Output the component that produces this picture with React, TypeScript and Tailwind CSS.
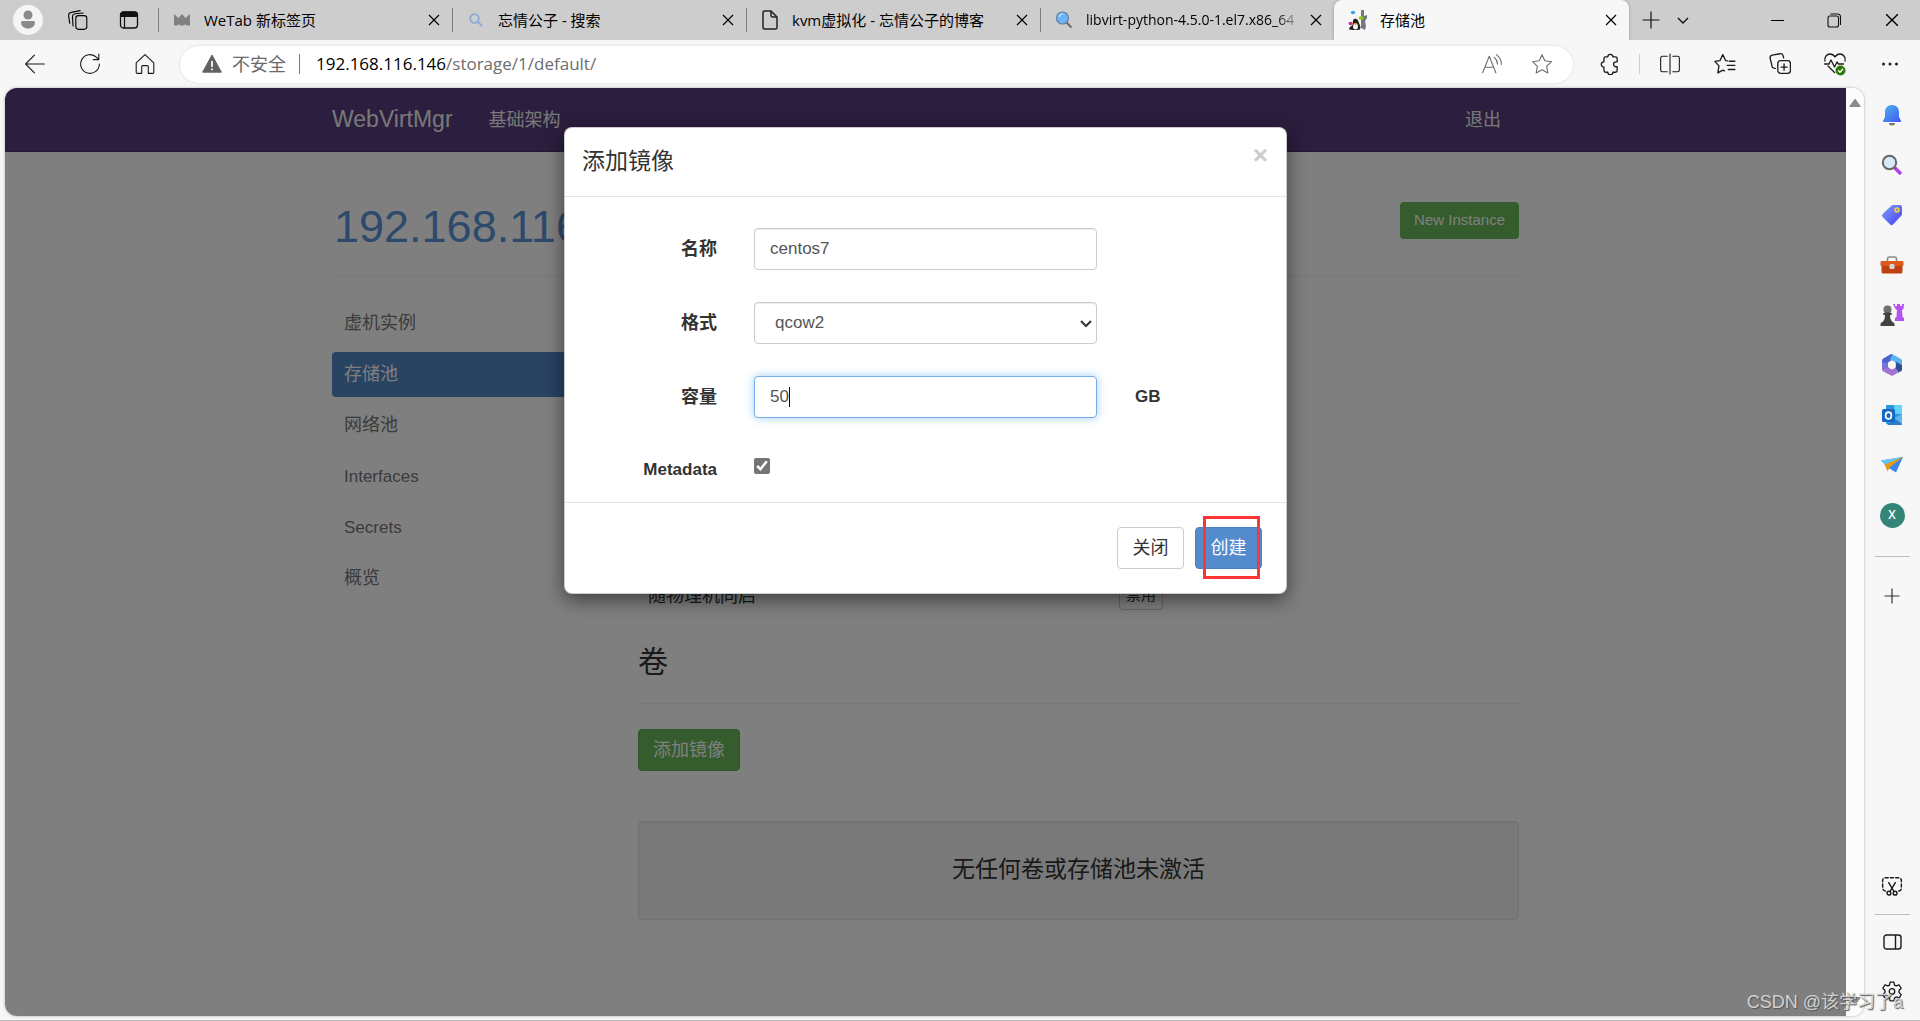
import type { ReactNode } from "react";

const uiFont = "font-['Open_Sans','Noto_Sans_CJK_SC',sans-serif]";
const pageFont = "font-['Liberation_Sans','Noto_Sans_CJK_SC',sans-serif]";

function Line({ size = 22, width = 1, children }: { size?: number; width?: number; children: ReactNode }) {
  return (
    <svg width={size} height={size} viewBox="0 0 20 20" fill="none" stroke="currentColor" strokeWidth={width} strokeLinecap="round" strokeLinejoin="round">
      {children}
    </svg>
  );
}

function Cross({ size = 12 }: { size?: number }) {
  return (
    <svg width={size} height={size} viewBox="0 0 12 12" stroke="currentColor" strokeWidth="1.2">
      <path d="M1 1l10 10M11 1L1 11" />
    </svg>
  );
}

const tabs = [
  {
    title: "WeTab 新标签页",
    icon: (
      <svg width="16" height="12" viewBox="0 0 16 12" fill="#808080">
        <path d="M0 0l4.500 4L8 0l3.500 4L16 0v11.500h-3.500l-1-1.500-1.500 1.500H6L4.500 10l-1 1.500H0z" />
      </svg>
    )
  },
  {
    title: "忘情公子 - 搜索",
    icon: (
      <svg width="16" height="16" viewBox="0 0 16 16" fill="none" stroke="#8ba9d8" strokeWidth="1.8">
        <circle cx="6.5" cy="6.5" r="4.3" />
        <path d="M9.7 9.7l4.500 4.500" />
      </svg>
    )
  },
  {
    title: "kvm虚拟化 - 忘情公子的博客",
    icon: (
      <svg width="18" height="20" viewBox="0 0 18 20" fill="none" stroke="#222" strokeWidth="1.5" strokeLinejoin="round">
        <path d="M2 2.500A1.500 1.500 0 0 1 3.500 1H10l6 6v10.500a1.500 1.500 0 0 1-1.500 1.500h-11A1.500 1.500 0 0 1 2 17.500z" />
        <path d="M10 1v4.500A1.500 1.500 0 0 0 11.500 7H16" />
      </svg>
    )
  },
  {
    title: "libvirt-python-4.5.0-1.el7.x86_64",
    long: true,
    icon: (
      <svg width="20" height="20" viewBox="0 0 20 20">
        <path d="M12 12l5.500 5.500" stroke="#6b6b6b" strokeWidth="2" />
        <circle cx="8.500" cy="8" r="6" fill="#6db3f7" stroke="#5f7f9f" strokeWidth="1.200" />
        <path d="M5 7a4 4 0 0 1 4-3" stroke="#b7dcff" strokeWidth="1.500" fill="none" />
      </svg>
    )
  },
  {
    title: "存储池",
    active: true,
    icon: (
      <svg width="22" height="22" viewBox="0 0 22 22">
        <path d="M14 1h3v6l3-1v3l-2 3 1 5-1 4-4-2z" fill="#737983" />
        <ellipse cx="6" cy="3.500" rx="2.200" ry="1.800" fill="#3ea3e6" />
        <path d="M6 12c0-3 4-3 5-.5l2.500 6.500-.5 2.500-3 .5H6l-4-.5.5-2L5.500 16z" fill="#1d1d1d" />
        <ellipse cx="8.500" cy="17.500" rx="2.500" ry="3" fill="#f4f4f4" />
        <path d="M6.500 14.200h4l-2 2.300z" fill="#f3b70d" />
        <ellipse cx="14" cy="9" rx="2.500" ry="1.800" fill="#8fca25" />
        <ellipse cx="3.500" cy="14.500" rx="2" ry="1.800" fill="#d6268c" />
      </svg>
    )
  }
];

function TabStrip() {
  return (
    <header className="flex h-10 items-center bg-[#cdcdcd] text-black">
      <div className="flex w-[158px] shrink-0 items-center">
        <button aria-label="Profile" className="ml-[13px] grid size-[30px] place-items-center rounded-full bg-[#f5f5f5]">
          <svg width="18" height="20" viewBox="0 0 18 20" fill="#8a8a8a">
            <circle cx="9" cy="5" r="4.500" />
            <path d="M2 12.500A1.500 1.500 0 0 1 3.500 11h11a1.500 1.500 0 0 1 1.500 1.500C16 16 13 18.500 9 18.500S2 16 2 12.500z" />
          </svg>
        </button>
        <button aria-label="Workspaces" className="ml-6">
          <Line size={22} width={1}>
            <rect x="8" y="6" width="10" height="12.500" rx="2.500" />
            <path d="M5.500 15.500l-.5-8a3 3 0 0 1 2.700-3.200l7-.6" />
            <path d="M2.500 13L1.500 6.500a3 3 0 0 1 2.500-3.400L12 1.500" />
          </Line>
        </button>
        <button aria-label="Tab actions" className="ml-[30px]">
          <svg width="20" height="20" viewBox="0 0 20 20">
            <rect x="1.500" y="2" width="17" height="16" rx="3" fill="none" stroke="#111" strokeWidth="1.300" />
            <path d="M1 5a3.500 3.500 0 0 1 3.500-3.500h11A3.500 3.500 0 0 1 19 5v2H1z" fill="#111" />
            <path d="M5.500 7v11" stroke="#111" strokeWidth="1.200" />
          </svg>
        </button>
      </div>
      {tabs.map((tab) => (
        <div
          key={tab.title}
          className={
            tab.active
              ? "flex h-10 max-w-[295px] min-w-0 flex-1 items-center rounded-t-lg bg-[#f7f7f7] shadow-[0_0_3px_rgba(0,0,0,0.3)] [clip-path:inset(-4px_-4px_0_-4px)]"
              : "flex h-10 max-w-[294px] min-w-0 flex-1 items-center"
          }
        >
          <span className={tab.active ? "h-6 w-px" : "h-6 w-px bg-[#7d7d7d]"} />
          <span className="ml-3 grid w-[22px] shrink-0 place-items-center">{tab.icon}</span>
          <span
            className={
              tab.long
                ? "mr-1 ml-[11px] min-w-0 flex-1 text-sm whitespace-nowrap [mask-image:linear-gradient(to_right,black_88%,transparent)]"
                : "mr-1 ml-[11px] min-w-0 flex-1 truncate text-[15px]"
            }
          >
            {tab.title}
          </span>
          <button aria-label="Close tab" className="mr-2 grid size-5 shrink-0 place-items-center">
            <Cross />
          </button>
        </div>
      ))}
      <button aria-label="New tab" className="ml-[13px]">
        <svg width="18" height="18" viewBox="0 0 18 18" stroke="#111" strokeWidth="1.200">
          <path d="M9 0.500v17M0.500 9h17" />
        </svg>
      </button>
      <button aria-label="Tab list" className="ml-4">
        <svg width="14" height="14" viewBox="0 0 14 14" fill="none" stroke="#111" strokeWidth="1.400">
          <path d="M2 5l5 5 5-5" />
        </svg>
      </button>
      <div className="ml-auto flex h-10">
        <button aria-label="Minimize" className="grid w-[57px] place-items-center">
          <span className="h-px w-[13px] bg-black" />
        </button>
        <button aria-label="Restore" className="grid w-[57px] place-items-center">
          <svg width="15" height="15" viewBox="0 0 15 15" fill="none" stroke="#111" strokeWidth="1.100">
            <rect x="1" y="3" width="10.500" height="11" rx="2" />
            <path d="M3.500 1h7a3 3 0 0 1 3 3v8" />
          </svg>
        </button>
        <button aria-label="Close" className="grid w-[57px] place-items-center">
          <Cross size={14} />
        </button>
      </div>
    </header>
  );
}

function ToolButton({ label, children }: { label: string; children: ReactNode }) {
  return (
    <button aria-label={label} className="grid h-10 w-[55px] shrink-0 place-items-center text-[#1b1b1b]">
      {children}
    </button>
  );
}

function Toolbar() {
  return (
    <div className="flex h-12 items-center pr-[3px] pl-[7px]">
      <ToolButton label="Back">
        <Line>
          <path d="M18.500 10H1.500M9.500 2L1.500 10l8 8" />
        </Line>
      </ToolButton>
      <ToolButton label="Reload">
        <Line>
          <path d="M18.500 10A8.500 8.500 0 1 1 16 4l1.500 1.800M18 1v5h-5" />
        </Line>
      </ToolButton>
      <ToolButton label="Home">
        <Line>
          <path d="M2 9l8-7.500L18 9v8.500a1 1 0 0 1-1 1h-4v-6a1 1 0 0 0-1-1H8a1 1 0 0 0-1 1v6H3a1 1 0 0 1-1-1z" />
        </Line>
      </ToolButton>
      <div className="ml-2 flex h-[37px] min-w-0 flex-1 items-center rounded-full bg-white pr-5 pl-[22px] shadow-[0_0_3px_rgba(0,0,0,0.12)]">
        <svg width="20" height="20" viewBox="0 0 20 20" className="shrink-0">
          <path d="M10 1.500L19 18H1z" fill="#616161" stroke="#616161" strokeWidth="1.500" strokeLinejoin="round" />
          <path d="M10 7v6M10 14.500v1.800" stroke="#fff" strokeWidth="1.700" />
        </svg>
        <span className="ml-2.5 text-lg whitespace-nowrap text-[#6a6a6a]">不安全</span>
        <span className="mr-4 ml-[13px] h-5 w-px shrink-0 bg-[#777]" />
        <div role="textbox" aria-label="Address" className="min-w-0 flex-1 truncate text-[17px] text-[#6e6e6e]">
          <span className="text-black">192.168.116.146</span>/storage/1/default/
        </div>
        <button aria-label="Read aloud" className="mr-7 text-[#6e6e6e]">
          <Line>
            <path d="M1.500 18L7.500 3l6 15M3.500 13h8M12 4a8 8 0 0 1 3 6M14 1.500a11 11 0 0 1 4.500 9" />
          </Line>
        </button>
        <button aria-label="Favorite" className="text-[#6e6e6e]">
          <Line>
            <path d="M10 1.500l2.600 5.600 6 .8-4.400 4.200 1.100 6.100L10 15.200l-5.300 3 1.100-6.100L1.400 7.900l6-.8z" />
          </Line>
        </button>
      </div>
      <div className="ml-[9px] flex items-center">
        <ToolButton label="Extensions">
          <Line width={1.2}>
            <path d="M6 3.500h2a2.300 2.300 0 0 1 4.600 0H15A1.500 1.500 0 0 1 16.500 5v3h-1a2 2 0 0 0 0 4.500h1V16a1.500 1.500 0 0 1-1.500 1.500h-2.400a2.300 2.300 0 0 1-4.600 0H6A1.500 1.500 0 0 1 4.500 16v-3.200a2.400 2.400 0 0 1 0-4.800V5A1.500 1.500 0 0 1 6 3.500z" />
          </Line>
        </ToolButton>
        <span className="mx-0.5 h-5 w-px bg-[#cfcfcf]" />
        <ToolButton label="Split screen">
          <Line>
            <path d="M7.500 3H3a1.500 1.500 0 0 0-1.500 1.500v11A1.500 1.500 0 0 0 3 17h4.500M10 1v18M12.500 3H17a1.500 1.500 0 0 1 1.500 1.500v11A1.500 1.500 0 0 1 17 17h-4.500" />
          </Line>
        </ToolButton>
        <ToolButton label="Favorites">
          <Line width={1.2}>
            <path d="M12.500 7.200l-2-.3L8 1.500 5.500 6.900.8 7.600l3.700 4.100-1 6.300L8 15.500l1.500.8M14 7.500h5M12 11.200h7M13 15h6" />
          </Line>
        </ToolButton>
        <ToolButton label="Collections">
          <Line width={1.2}>
            <rect x="8" y="7" width="11.500" height="11.500" rx="2.500" />
            <path d="M13.700 10v5.600M11 12.800h5.500M5.800 14l-1.300-.2A2.500 2.500 0 0 1 2.600 11L1 4.800A2.500 2.500 0 0 1 3 2l7-1.300a2.500 2.500 0 0 1 2.800 1.700l.5 2" />
          </Line>
        </ToolButton>
        <ToolButton label="Browser essentials">
          <svg width="24" height="24" viewBox="0 0 24 24" fill="none" stroke="#1b1b1b" strokeWidth="1.300" strokeLinecap="round" strokeLinejoin="round">
            <path d="M2 9C1 5 4 2 7 2c2.500 0 4 1.500 5 3 1-1.500 2.500-3 5-3 3 0 6 3 5 7M5 14l6.500 6.500M1.500 12H6l2-4 3.500 7L14 10l1.500 2h5" />
            <circle cx="17.500" cy="18.500" r="5" fill="#2b7a0b" stroke="none" />
            <path d="M15.500 18.700l1.500 1.500 2.700-3" stroke="#fff" />
          </svg>
        </ToolButton>
        <ToolButton label="Settings and more">
          <svg width="18" height="4" viewBox="0 0 18 4" fill="#222">
            <circle cx="2.500" cy="2" r="1.500" />
            <circle cx="9" cy="2" r="1.500" />
            <circle cx="15.500" cy="2" r="1.500" />
          </svg>
        </ToolButton>
      </div>
    </div>
  );
}

function SideButton({ label, children }: { label: string; children: ReactNode }) {
  return (
    <button aria-label={label} className="grid h-[50px] w-full shrink-0 place-items-center text-[#1b1b1b]">
      {children}
    </button>
  );
}

function EdgeSidebar() {
  return (
    <aside className="flex w-14 shrink-0 flex-col items-center pt-0.5 pb-[3px]">
      <SideButton label="Notifications">
        <svg width="22" height="22" viewBox="0 0 22 22">
          <defs>
            <linearGradient id="bell" x1="0" y1="0" x2="1" y2="1">
              <stop offset="0" stopColor="#4cb4ee" />
              <stop offset="1" stopColor="#4257f2" />
            </linearGradient>
          </defs>
          <path d="M8 19h6a3 2.500 0 0 1-6 0z" fill="#777" />
          <path d="M11 1c4.500 0 7 3.300 7 7v5l2 4c.2.600 0 1-.6 1H2.600c-.6 0-.8-.4-.6-1l2-4V8c0-3.700 2.500-7 7-7z" fill="url(#bell)" />
        </svg>
      </SideButton>
      <SideButton label="Search">
        <svg width="22" height="22" viewBox="0 0 22 22">
          <path d="M14 14l6 6" stroke="#b63df0" strokeWidth="3.500" />
          <path d="M12.500 12.500l2 2" stroke="#555" strokeWidth="2" />
          <circle cx="8.500" cy="8.500" r="6.700" fill="#d6e9fa" stroke="#666" strokeWidth="2" />
        </svg>
      </SideButton>
      <SideButton label="Shopping">
        <svg width="22" height="22" viewBox="0 0 22 22">
          <defs>
            <linearGradient id="tag" x1="0" y1="0" x2="1" y2="1">
              <stop offset="0" stopColor="#7ba4ff" />
              <stop offset="1" stopColor="#4a3df0" />
            </linearGradient>
          </defs>
          <path d="M12 1h7a2 2 0 0 1 2 2v7a2 2 0 0 1-.6 1.500l-8.400 9a2 2 0 0 1-2.800 0l-7.600-7.600a2 2 0 0 1 0-2.800l9-8.500A2 2 0 0 1 12 1z" fill="url(#tag)" />
          <circle cx="16" cy="6" r="2" fill="#8c8fd0" stroke="#f5cf3e" strokeWidth="1.500" />
        </svg>
      </SideButton>
      <SideButton label="Tools">
        <svg width="24" height="20" viewBox="0 0 24 20">
          <path d="M7.500 7V4a2 2 0 0 1 2-2h5a2 2 0 0 1 2 2v3" fill="none" stroke="#8b8b8b" strokeWidth="1.600" />
          <rect x="1.500" y="7" width="21" height="11.500" rx="1.500" fill="#bd4210" />
          <rect x="0.500" y="6" width="23" height="5" rx="1" fill="#db5a1c" />
          <rect x="9.500" y="9" width="5" height="5" rx="1.500" fill="#d7d7d7" />
        </svg>
      </SideButton>
      <SideButton label="Games">
        <svg width="24" height="24" viewBox="0 0 24 24">
          <path d="M13 1h2v2h2V1h3v2h2V1h2l-.5 5-1.500 1 .5 7 1.500 1v3h-9v-3l1.500-1 .5-7-1.500-1z" fill="#b552f2" />
          <circle cx="7.500" cy="6.500" r="4" fill="#6f6f6f" />
          <path d="M3 11c0-1 1-1.500 4.500-1.500S12 10 12 11c0 .8-1 1-2 1 0 4 1 5.500 2.500 7 1.500.5 2 1.500 2 2.500v1.500H.5v-1.500c0-1 .5-2 2-2.500C4 17.500 5 16 5 12c-1 0-2-.2-2-1z" fill="#424242" />
        </svg>
      </SideButton>
      <SideButton label="Microsoft 365">
        <svg width="22" height="24" viewBox="0 0 22 24">
          <path d="M9.500 1.300L2 5.700a2 2 0 0 0-1 1.800v9l6-2V9.500L14 5l-2.500-3.700a2 2 0 0 0-2 0z" fill="#4f62cf" />
          <path d="M11.500 1.300L20 6a2 2 0 0 1 1 1.800V12l-6.500-3L9 6.500z" fill="#58b5ee" />
          <path d="M14.500 8.500L21 12v4.500a2 2 0 0 1-1 1.700l-3 1.500-3.500-3.500 1-2.500z" fill="#2d4f92" />
          <path d="M1 16.500l6-3 3.500 3 4-1.500 3.500 4-6 3.500a2 2 0 0 1-2 0L2 18.200a2 2 0 0 1-1-1.700z" fill="#a274cf" />
          <path d="M1 9l6 1v4.500l-6 2z" fill="#7a74d8" />
          <path d="M11 8l3.700 2.200v4L11 16.300l-3.700-2.100v-4z" fill="#f7f7f7" />
        </svg>
      </SideButton>
      <SideButton label="Outlook">
        <svg width="22" height="22" viewBox="0 0 22 22">
          <rect x="5" y="1" width="16" height="19" rx="1" fill="#2f94e0" />
          <path d="M13 1h8v9h-8z" fill="#64d3fa" />
          <path d="M21 10v10a1 1 0 0 1-1 1H6z" fill="#2d7cc6" />
          <path d="M13 14l8-4v10z" fill="#5bb9ee" />
          <rect x="1" y="5" width="13" height="13" rx="1.500" fill="#1769c4" />
          <ellipse cx="7.500" cy="11.500" rx="2.900" ry="3.400" fill="none" stroke="#fff" strokeWidth="1.700" />
        </svg>
      </SideButton>
      <SideButton label="Drop">
        <svg width="24" height="20" viewBox="0 0 24 20">
          <path d="M1 5.500L23 2l-7 15.500-8-5z" fill="#3a86ea" />
          <path d="M1 5.500L23 2 5.500 10z" fill="#63c4f7" />
          <path d="M4.500 9.500L23 2 10 12l-2.500 4.500L6 13z" fill="#e79a17" />
        </svg>
      </SideButton>
      <SideButton label="Account">
        <span className="grid size-[25px] place-items-center rounded-full bg-[#338577] text-xs font-semibold text-white">X</span>
      </SideButton>
      <hr className="mt-4 w-[35px] border-[#bcbcbc]" />
      <div className="mt-3.5 w-full">
        <SideButton label="Customize">
          <svg width="16" height="16" viewBox="0 0 16 16" stroke="#333" strokeWidth="1.200">
            <path d="M8 0.500v15M0.500 8h15" />
          </svg>
        </SideButton>
      </div>
      <div className="mt-auto flex w-full flex-col items-center">
        <SideButton label="Screenshot">
          <Line width={1.3}>
            <path d="M4 14.500a2.500 2.500 0 0 1-2.500-2.500V5A2.500 2.500 0 0 1 4 2.500h12A2.500 2.500 0 0 1 18.500 5v7a2.500 2.500 0 0 1-2.500 2.500" strokeDasharray="2.800 2" />
            <path d="M7 7l4.800 8M13 7l-4.800 8" />
            <circle cx="7.200" cy="16.500" r="1.700" />
            <circle cx="12.800" cy="16.500" r="1.700" />
          </Line>
        </SideButton>
        <hr className="mt-[3px] mb-0.5 w-[35px] border-[#bcbcbc]" />
        <SideButton label="Hide sidebar">
          <svg width="19" height="16" viewBox="0 0 19 16" fill="none" stroke="#1b1b1b" strokeWidth="1.400">
            <rect x="1" y="1" width="17" height="14" rx="2.500" />
            <path d="M12.500 1v14" />
          </svg>
        </SideButton>
        <SideButton label="Settings">
          <Line width={1.2}>
            <path d="M8.300 1h3.400l.6 2.700 1.500.8 2.600-.9 1.900 3-1.900 2v1.800l2 2-1.800 3-2.700-.9-1.500.9-.7 2.600H8.300l-.7-2.600-1.500-.9-2.700.9-1.800-3 2-2V8.600l-1.900-2 1.900-3 2.600.9 1.500-.8z" />
            <circle cx="10" cy="9.500" r="2.500" />
          </Line>
        </SideButton>
      </div>
    </aside>
  );
}

const navItems = ["虚机实例", "存储池", "网络池", "Interfaces", "Secrets", "概览"];

function StoragePage() {
  return (
    <div className="flex-1 bg-white text-[#333]">
      <nav className="h-16 border-b border-[#463265] bg-[#563d7c] text-[#f0f0f0]">
        <div className="mx-auto flex h-[63px] w-full max-w-[1187px] items-center pr-[18px] whitespace-nowrap">
          <a href="#" className="text-[23px]">WebVirtMgr</a>
          <a href="#" className="ml-9 text-lg">基础架构</a>
          <a href="#" className="ml-auto text-lg">退出</a>
        </div>
      </nav>
      <div className="mx-auto w-full max-w-[1187px] pt-[50px]">
        <div className="flex items-start justify-between border-b border-[#eee] pb-[23px]">
          <h1 className="pl-0.5 text-[45px] leading-[50px] text-[#5a94d8]">192.168.116.146</h1>
          <button className="h-[37px] rounded bg-[#69b958] px-3.5 text-[15px] text-white">New Instance</button>
        </div>
        <div className="mt-[25px] flex gap-[30px]">
          <ul className="flex w-[276px] shrink-0 flex-col gap-1.5">
            {navItems.map((item) => (
              <li key={item}>
                <a
                  href="#"
                  className={
                    item === "存储池"
                      ? "flex h-[45px] items-center rounded bg-[#5386c6] px-3 pb-0.5 text-lg text-white"
                      : item === "Interfaces" || item === "Secrets"
                        ? "flex h-[45px] items-center px-3 text-[17px] text-[#777]"
                        : "flex h-[45px] items-center px-3 pb-0.5 text-lg text-[#777]"
                  }
                >
                  {item}
                </a>
              </li>
            ))}
          </ul>
          <section className="min-w-0 flex-1">
            <div className="mt-[281px] flex h-[27px] items-center pl-2.5">
              <span className="w-[471px] text-lg">随物理机同启</span>
              <button className="h-7 rounded-sm border border-[#ccc] px-1.5 text-[15px]">禁用</button>
            </div>
            <h2 className="mt-9 border-b border-[#eee] pb-6 text-3xl leading-[34px]">卷</h2>
            <button className="mt-[25px] h-[42px] rounded border border-[#5fa850] bg-[#69b958] px-3.5 text-lg text-white">添加镜像</button>
            <div className="mt-[50px] rounded border border-[#e3e3e3] bg-[#f2f2f2] pt-[31px] pb-[33px] text-center text-[23px] leading-[33px] shadow-[inset_0_1px_1px_rgba(0,0,0,0.05)]">
              无任何卷或存储池未激活
            </div>
          </section>
        </div>
      </div>
    </div>
  );
}

const labelClass = "w-[152px] shrink-0 text-right font-bold";
const fieldClass = "h-[42px] w-full rounded border border-[#ccc] bg-white text-[17px] text-[#555] outline-none shadow-[inset_0_1px_1px_rgba(0,0,0,0.075)]";

function AddImageDialog() {
  return (
    <div className="absolute inset-0 flex items-start justify-center bg-black/50 pt-[39px]">
      <form role="dialog" aria-label="添加镜像" className="w-full max-w-[723px] rounded-lg border border-black/20 bg-white text-[#333] shadow-[0_6px_19px_rgba(0,0,0,0.5)]">
        <div className="flex h-[69px] items-start justify-between border-b border-[#e5e5e5] pr-[18px] pl-[17px]">
          <h4 className="pt-[17px] text-[23px] leading-8">添加镜像</h4>
          <button type="button" aria-label="关闭" className="pt-3 text-[26px] leading-[30px] font-bold text-[#ccc]">×</button>
        </div>
        <div className="flex flex-col gap-8 pt-[31px] pb-[18px] text-lg">
          <div className="flex items-center">
            <label htmlFor="name" className={labelClass}>名称</label>
            <div className="ml-[37px] w-[343px]">
              <input id="name" defaultValue="centos7" className={`${fieldClass} px-[15px]`} />
            </div>
          </div>
          <div className="flex items-center">
            <label htmlFor="format" className={labelClass}>格式</label>
            <div className="relative ml-[37px] w-[343px]">
              <select id="format" defaultValue="qcow2" className={`${fieldClass} appearance-none px-5`}>
                <option>qcow2</option>
                <option>raw</option>
              </select>
              <svg width="12" height="8" viewBox="0 0 12 8" fill="none" stroke="#333" strokeWidth="2" className="pointer-events-none absolute top-[18px] right-[5px]">
                <path d="M1 1l5 5 5-5" />
              </svg>
            </div>
          </div>
          <div className="flex items-center">
            <label htmlFor="size" className={labelClass}>容量</label>
            <div className="relative ml-[37px] w-[343px]">
              <input
                id="size"
                defaultValue="50"
                className="h-[42px] w-full rounded border border-[#74aeea] bg-white px-[15px] text-[17px] text-[#555] shadow-[0_0_10px_rgba(102,175,233,0.6)] outline-none"
              />
              <span className="absolute top-[11px] left-[35px] h-5 w-px bg-black" />
            </div>
            <span className="ml-[38px] text-[17px] font-bold">GB</span>
          </div>
          <div className="flex h-[34px] items-start">
            <label htmlFor="metadata" className={`${labelClass} pt-2 text-[17px] leading-6`}>Metadata</label>
            <input id="metadata" type="checkbox" defaultChecked className="mt-2 ml-[37px] size-4 accent-[#757575]" />
          </div>
        </div>
        <div className="flex justify-end gap-[11px] border-t border-[#e5e5e5] py-6 pr-6 text-lg">
          <button type="button" className="h-[42px] w-[67px] rounded border border-[#ccc] bg-white">关闭</button>
          <div className="relative">
            <button type="submit" className="h-[42px] w-[67px] rounded border border-[#4a80c4] bg-[#548bcd] text-white">创建</button>
            <span className="pointer-events-none absolute -top-[11px] right-0.5 h-[63px] w-[57px] border-3 border-[#fd3535]" />
          </div>
        </div>
      </form>
    </div>
  );
}

export default function App() {
  return (
    <div className={`${uiFont} relative flex min-h-screen flex-col border-b border-[#bdbdbd] bg-[#f7f7f7]`}>
      <TabStrip />
      <Toolbar />
      <div className="flex flex-1">
        <div className="flex min-w-0 flex-1 pb-1 pl-[5px]">
          <main className={`${pageFont} flex flex-1 overflow-hidden rounded-xl shadow-[0_0_3px_rgba(0,0,0,0.3)]`}>
            <div className="relative flex min-w-0 flex-1">
              <StoragePage />
              <AddImageDialog />
            </div>
            <div className="flex w-[18px] flex-col items-center justify-between bg-[#fcfcfc] py-2.5 text-[#8b8b8b]">
              <svg width="12" height="9" viewBox="0 0 12 9" fill="currentColor">
                <path d="M6 0.500L11.500 8a.6.6 0 0 1-.5 1H1a.6.6 0 0 1-.5-1z" />
              </svg>
              <svg width="12" height="9" viewBox="0 0 12 9" fill="currentColor">
                <path d="M6 8.500L.5 1A.6.6 0 0 1 1 0h10a.6.6 0 0 1 .5 1z" />
              </svg>
            </div>
          </main>
        </div>
        <EdgeSidebar />
      </div>
      <p className={`${pageFont} pointer-events-none absolute right-[17px] bottom-1 text-lg text-[#d0d0d0] [text-shadow:1px_1px_1px_#555]`}>CSDN @该学习了a</p>
    </div>
  );
}
